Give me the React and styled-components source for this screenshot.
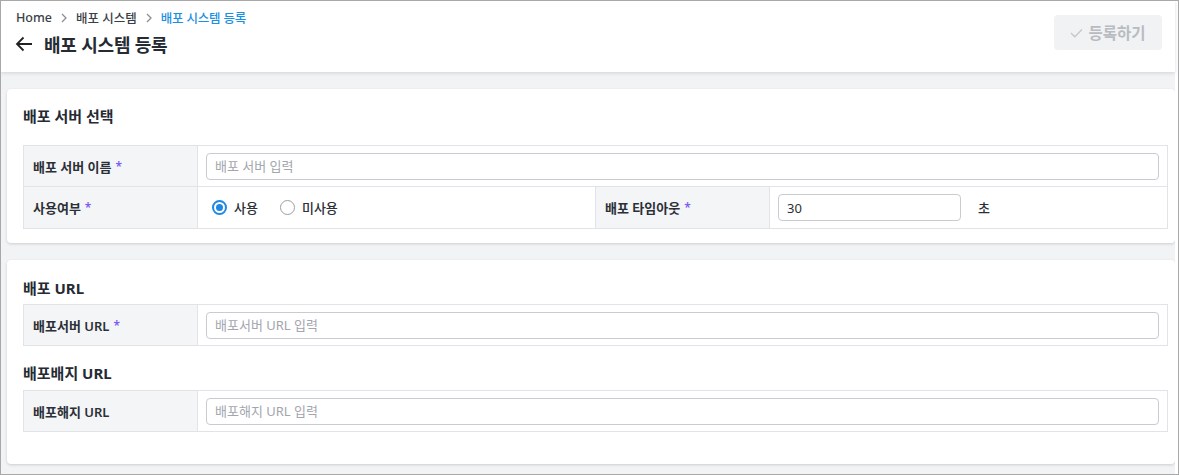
import React from "react";
import styled, { createGlobalStyle } from "styled-components";

const Global = createGlobalStyle`
  html, body { margin: 0; padding: 0; }
  body {
    font-family: "Noto Sans", "Noto Sans CJK KR", sans-serif;
    color: #2b2f36;
  }
  * { box-sizing: border-box; }
`;

const Frame = styled.div`
  width: 1179px;
  height: 475px;
  border: 1px solid #a8a8a8;
  background: #fff;
  display: flex;
  overflow: hidden;
`;

const Main = styled.div`
  width: 1174px;
  height: 100%;
  background: #f2f3f5;
  display: flex;
  flex-direction: column;
`;

const Header = styled.header`
  height: 71px;
  background: #fff;
  box-shadow: 0 1px 4px rgba(0, 0, 0, 0.14);
  display: flex;
  justify-content: space-between;
  align-items: flex-start;
  padding: 8px 13px 0 14px;
  position: relative;
  z-index: 1;
`;

const HeaderLeft = styled.div`
  display: flex;
  flex-direction: column;
  gap: 5px;
`;

const Breadcrumb = styled.nav`
  display: flex;
  align-items: center;
  gap: 9px;
  height: 17px;
  padding-left: 1px;
  font-size: 12.5px;
  font-weight: 500;
  color: #3a3f47;
`;

const Crumb = styled.span`
  color: ${(p) => (p.$active ? "#1a8fe3" : "#3a3f47")};
  font-weight: 500;
  letter-spacing: ${(p) => (p.$active ? "-0.2px" : "0")};
`;

const Chevron = styled.svg`
  width: 6px;
  height: 10px;
`;

const TitleRow = styled.div`
  display: flex;
  align-items: center;
  gap: 11px;
  height: 26px;
`;

const BackIcon = styled.svg`
  width: 18px;
  height: 16px;
`;

const Title = styled.h1`
  margin: 0;
  font-size: 18px;
  font-weight: 700;
  color: #252a33;
  letter-spacing: -0.2px;
`;

const SubmitButton = styled.button`
  margin-top: 6px;
  width: 108px;
  height: 35px;
  border: none;
  border-radius: 4px;
  background: #f1f2f4;
  color: #b8bcc2;
  font-family: inherit;
  font-size: 15.5px;
  font-weight: 700;
  display: flex;
  align-items: center;
  justify-content: center;
  gap: 5px;
  cursor: not-allowed;
`;

const Content = styled.div`
  flex: 1;
  display: flex;
  flex-direction: column;
  gap: 17px;
  padding: 17px 0 0 6px;
`;

const Card = styled.section`
  background: #fff;
  border-radius: 4px;
  box-shadow: 0 1px 3px rgba(0, 0, 0, 0.16);
  padding: ${(p) => p.$padding};
`;

const SectionTitle = styled.h2`
  margin: 0;
  height: 20px;
  line-height: 20px;
  font-size: 15px;
  font-weight: 700;
  color: #252a33;
  margin-bottom: ${(p) => p.$gap || "8px"};
  margin-top: ${(p) => p.$top || "0"};
`;

const Table = styled.div`
  display: grid;
  grid-template-columns: 174px 1fr 174px 1fr;
  border-top: 1px solid #e1e3e6;
  border-left: 1px solid #e1e3e6;
`;

const Label = styled.div`
  grid-column: ${(p) => p.$span || "auto"};
  height: ${(p) => p.$h || "41px"};
  background: #f4f5f7;
  border-right: 1px solid #e1e3e6;
  border-bottom: 1px solid #e1e3e6;
  display: flex;
  align-items: center;
  padding-left: 9px;
  font-size: 13px;
  font-weight: 600;
  color: #2b2f36;
`;

const Required = styled.span`
  color: #7b5cf5;
  margin-left: 4px;
  font-size: 12px;
`;

const Cell = styled.div`
  grid-column: ${(p) => p.$span || "auto"};
  height: ${(p) => p.$h || "41px"};
  border-right: 1px solid #e1e3e6;
  border-bottom: 1px solid #e1e3e6;
  display: flex;
  align-items: center;
  padding: 0 8px;
`;

const TextInput = styled.input`
  width: ${(p) => p.$width || "100%"};
  height: 27px;
  border: 1px solid #c9cbcf;
  border-radius: 4px;
  padding: 0 8px;
  font-family: inherit;
  font-size: 13px;
  color: #2b2f36;
  outline: none;
  background: #fff;
  &::placeholder { color: #a2a6ad; }
`;

const RadioGroup = styled.div`
  display: flex;
  align-items: center;
  gap: 22px;
  padding-left: 6px;
`;

const RadioItem = styled.label`
  display: flex;
  align-items: center;
  gap: 7px;
  font-size: 13px;
  font-weight: 500;
  color: #2b2f36;
`;

const RadioCircle = styled.span`
  width: 15px;
  height: 15px;
  border-radius: 50%;
  border: ${(p) => (p.$checked ? "2px solid #1e88e5" : "1.5px solid #9aa0a6")};
  display: flex;
  align-items: center;
  justify-content: center;
  &::after {
    content: "";
    width: 7px;
    height: 7px;
    border-radius: 50%;
    background: ${(p) => (p.$checked ? "#1e88e5" : "transparent")};
  }
`;

const Unit = styled.span`
  font-size: 13px;
  font-weight: 500;
  color: #2b2f36;
  margin-left: 17px;
`;

const Gutter = styled.div`
  flex: 1;
  background: #fff;
`;

const ChevronIcon = () => (
  <Chevron viewBox="0 0 6 10" fill="none">
    <path d="M1 1l4 4-4 4" stroke="#8a8f96" strokeWidth="1.3" />
  </Chevron>
);

export default function App() {
  return (
    <>
      <Global />
      <Frame>
        <Main>
          <Header>
            <HeaderLeft>
              <Breadcrumb>
                <Crumb>Home</Crumb>
                <ChevronIcon />
                <Crumb>배포 시스템</Crumb>
                <ChevronIcon />
                <Crumb $active>배포 시스템 등록</Crumb>
              </Breadcrumb>
              <TitleRow>
                <BackIcon viewBox="0 0 18 16" fill="none">
                  <path d="M17 8H2M8.5 1.5L2 8l6.5 6.5" stroke="#222" strokeWidth="1.8" />
                </BackIcon>
                <Title>배포 시스템 등록</Title>
              </TitleRow>
            </HeaderLeft>
            <SubmitButton disabled>
              <svg width="13" height="10" viewBox="0 0 13 10" fill="none">
                <path d="M1 5l3.8 3.8L12 1.5" stroke="#c3c6cb" strokeWidth="1.3" />
              </svg>
              등록하기
            </SubmitButton>
          </Header>
          <Content>
            <Card $padding="17px 7px 14px 16px">
              <SectionTitle $gap="19px">배포 서버 선택</SectionTitle>
              <Table>
                <Label>
                  배포 서버 이름<Required>*</Required>
                </Label>
                <Cell $span="span 3">
                  <TextInput placeholder="배포 서버 입력" />
                </Cell>
                <Label $h="42px">
                  사용여부<Required>*</Required>
                </Label>
                <Cell $h="42px">
                  <RadioGroup>
                    <RadioItem>
                      <RadioCircle $checked />
                      사용
                    </RadioItem>
                    <RadioItem>
                      <RadioCircle />
                      미사용
                    </RadioItem>
                  </RadioGroup>
                </Cell>
                <Label $h="42px">
                  배포 타임아웃<Required>*</Required>
                </Label>
                <Cell $h="42px">
                  <TextInput $width="183px" defaultValue="30" />
                  <Unit>초</Unit>
                </Cell>
              </Table>
            </Card>
            <Card $padding="18px 7px 32px 16px">
              <SectionTitle $gap="6px">배포 URL</SectionTitle>
              <Table>
                <Label>
                  배포서버 URL<Required>*</Required>
                </Label>
                <Cell $span="span 3">
                  <TextInput placeholder="배포서버 URL 입력" />
                </Cell>
              </Table>
              <SectionTitle $top="17px" $gap="7px">배포배지 URL</SectionTitle>
              <Table>
                <Label>배포해지 URL</Label>
                <Cell $span="span 3">
                  <TextInput placeholder="배포해지 URL 입력" />
                </Cell>
              </Table>
            </Card>
          </Content>
        </Main>
        <Gutter />
      </Frame>
    </>
  );
}
